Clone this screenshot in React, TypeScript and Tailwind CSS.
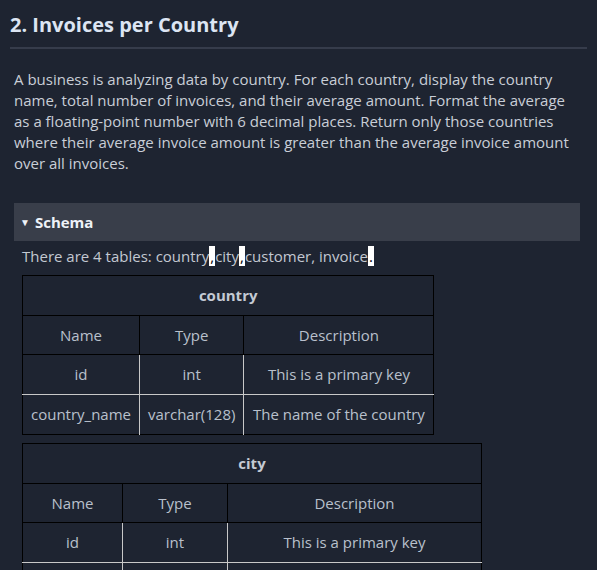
import React from "react";

const W = ({ c }: { c: string }) => (
  <span className="bg-white px-[1px] text-black">{c}</span>
);

type Row = [string, string, string];

function SchemaTable({
  name,
  cols,
  rows,
}: {
  name: string;
  cols: [string, string, string];
  rows: Row[];
}) {
  return (
    <table className="border-collapse border border-black text-[15px] text-[#b9c0cc]">
      <thead>
        <tr>
          <th colSpan={3} className="h-10 border border-black font-bold text-[#c4cad4]">
            {name}
          </th>
        </tr>
        <tr>
          <th className="h-[39px] border border-black font-normal" style={{ width: cols[0] }}>Name</th>
          <th className="h-[39px] border border-black font-normal" style={{ width: cols[1] }}>Type</th>
          <th className="h-[39px] border border-black font-normal" style={{ width: cols[2] }}>Description</th>
        </tr>
      </thead>
      <tbody>
        {rows.map((r, i) => (
          <tr key={i} className={i > 0 ? "border-t border-[#c8c8c8]" : ""}>
            <td className="h-[40px] border-r border-[#c8c8c8] px-2 text-center">{r[0]}</td>
            <td className="h-[40px] border-r border-[#c8c8c8] px-2 text-center">{r[1]}</td>
            <td className="h-[40px] px-2 text-center">{r[2]}</td>
          </tr>
        ))}
      </tbody>
    </table>
  );
}

export default function App() {
  return (
    <div
      className="min-h-[570px] bg-[#1e2431] text-[#c9ced7]"
      style={{ fontFamily: '"Open Sans", "Noto Sans", sans-serif' }}
    >
      <div className="px-[10px] pt-[10px]">
        <h2 className="border-b-2 border-[#363c4b] pb-[7px] text-[20px] font-bold leading-[30px] text-[#dce5f3]">
          2. Invoices per Country
        </h2>
      </div>
      <div className="px-[14px] pt-[20px]">
        <p className="text-[15px] leading-[21px]">
          A business is analyzing data by country. For each country, display the country name,
          total number of invoices, and their average amount. Format the average as a
          floating-point number with 6 decimal places. Return only those countries where their
          average invoice amount is greater than the average invoice amount over all invoices.
        </p>
        <div className="mt-[29px] w-[566px]">
          <div className="flex h-[38px] items-center bg-[#393e4a] px-[6px] text-[15px] font-bold text-[#eef2f8]">
            <span className="mr-[5px] text-[10px]">▼</span>Schema
          </div>
          <div className="px-[8px]">
            <p className="mt-[3px] text-[15px] leading-[24px] text-[#c3c8d1]">
              There are 4 tables: country<W c="," />city<W c="," />customer, invoice<W c="." />
            </p>
            <div className="mt-[7px]">
              <SchemaTable
                name="country"
                cols={["117px", "104px", "190px"]}
                rows={[
                  ["id", "int", "This is a primary key"],
                  ["country_name", "varchar(128)", "The name of the country"],
                ]}
              />
            </div>
            <div className="mt-[8px]">
              <SchemaTable
                name="city"
                cols={["100px", "105px", "254px"]}
                rows={[
                  ["id", "int", "This is a primary key"],
                  ["city_name", "varchar(128)", "The name of the city"],
                  ["country_id", "int", "Foreign key referencing the country table"],
                ]}
              />
            </div>
          </div>
        </div>
      </div>
    </div>
  );
}
